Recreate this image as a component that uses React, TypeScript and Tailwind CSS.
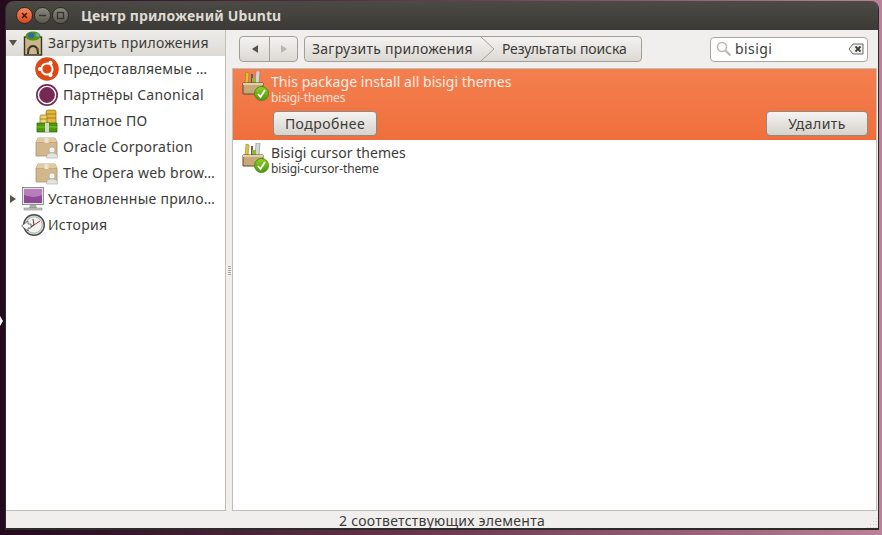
import { ReactNode } from 'react';

const Arrow = ({ open }: { open?: boolean }) => (
  <svg width="10" height="10" viewBox="0 0 10 10" className="shrink-0">
    {open ? <path d="M1 2h8L5 8z" fill="#55534e" /> : <path d="M2 1v8l6-4z" fill="#55534e" />}
  </svg>
);

const WinButton = ({ kind }: { kind: 'close' | 'min' | 'max' }) => {
  const bg = kind === 'close'
    ? 'bg-gradient-to-b from-[#f58a5a] to-[#d9451a] border-[#2e2c27]'
    : 'bg-gradient-to-b from-[#8b887f] to-[#5b5950] border-[#2e2c27]';
  return (
    <div className={`w-[17px] h-[17px] rounded-full border flex items-center justify-center ${bg}`}>
      <svg width="9" height="9" viewBox="0 0 9 9">
        {kind === 'close' && <path d="M2 2l5 5M7 2L2 7" stroke="#4a1a08" strokeWidth="1.6" />}
        {kind === 'min' && <path d="M1 4.5h7" stroke="#36342e" strokeWidth="1.6" />}
        {kind === 'max' && <rect x="1.5" y="1.5" width="6" height="6" fill="none" stroke="#36342e" strokeWidth="1.3" />}
      </svg>
    </div>
  );
};

const BoxIcon = () => (
  <svg width="24" height="24" viewBox="0 0 24 24">
    <path d="M3 3h17l2 4v14H1V7z" fill="#d2b68c" stroke="#ad926a" strokeWidth="0.8" />
    <path d="M3 3h17l2 4H1z" fill="#e0c9a5" />
    <path d="M1 7.5h21" stroke="#bda27a" strokeWidth="0.6" />
    <path d="M9.5 3h4v5h-4z" fill="#eee2cc" />
    <circle cx="17" cy="15" r="3" fill="#f3f3f1" stroke="#a5a7a2" strokeWidth="0.6" />
    <path d="M11.5 23c0-4.5 2.5-5 5.5-5s5.5 .5 5.5 5z" fill="#e2e4e0" stroke="#a5a7a2" strokeWidth="0.6" />
  </svg>
);

const UbuntuIcon = () => (
  <svg width="24" height="24" viewBox="0 0 24 24">
    <circle cx="12" cy="12" r="11.8" fill="#dd4814" />
    <circle cx="12" cy="12" r="5.6" fill="none" stroke="#fff" strokeWidth="2" />
    <circle cx="5" cy="12" r="2.1" fill="#fff" />
    <circle cx="15.5" cy="5.9" r="2.1" fill="#fff" />
    <circle cx="15.5" cy="18.1" r="2.1" fill="#fff" />
  </svg>
);

const CanonicalIcon = () => (
  <svg width="24" height="24" viewBox="0 0 24 24">
    <circle cx="12" cy="12" r="11" fill="#772953" />
    <circle cx="12" cy="12" r="8.6" fill="none" stroke="#fff" strokeWidth="1.4" />
  </svg>
);

const CoinsIcon = () => (
  <svg width="24" height="24" viewBox="0 0 24 24">
    <rect x="11" y="1" width="10" height="14" rx="2" fill="#e4b63c" stroke="#8f6d12" strokeWidth="0.7" />
    <path d="M11 5h10M11 9h10" stroke="#8f6d12" strokeWidth="0.7" />
    <rect x="5" y="6" width="7" height="9" rx="1.5" fill="#edd36b" stroke="#8f6d12" strokeWidth="0.7" />
    <path d="M5 10h7" stroke="#8f6d12" strokeWidth="0.7" />
    <path d="M2 14h20v9H2z" fill="#4e9a06" stroke="#2f6004" strokeWidth="0.7" />
    <path d="M2 18h20" stroke="#8ae234" strokeWidth="0.7" />
    <rect x="10" y="14" width="4" height="9" fill="#d3d7cf" />
  </svg>
);

const StoreIcon = () => (
  <svg width="24" height="26" viewBox="0 0 24 26">
    <rect x="3.5" y="7" width="17" height="18" fill="#c9b58e" stroke="#3d3524" strokeWidth="1.4" />
    <path d="M7 24c0-5 2-8 5-8s5 3 5 8" fill="none" stroke="#3d3524" strokeWidth="2" />
    <path d="M9 19H6M15 19h3" stroke="#6b5a3a" strokeWidth="1.5" />
    <ellipse cx="12" cy="6" rx="7.5" ry="4.5" fill="#4e9a06" />
    <circle cx="10" cy="5.5" r="3" fill="#3465a4" />
    <circle cx="16.5" cy="5" r="2" fill="#729fcf" />
  </svg>
);

const MonitorIcon = () => (
  <svg width="24" height="24" viewBox="0 0 24 24">
    <rect x="1.5" y="0.5" width="21" height="17" fill="#e4e4e2" stroke="#777" strokeWidth="0.8" />
    <rect x="3" y="2" width="18" height="14" fill="#8f4a96" />
    <path d="M3 2h18v6c-6 3-12 2-18 0z" fill="#b77cbb" />
    <path d="M9 18h6l1 3H8z" fill="#aaa" />
    <rect x="3" y="21" width="18" height="2" fill="#c9c9c7" stroke="#777" strokeWidth="0.5" />
  </svg>
);

const HistoryIcon = () => (
  <svg width="24" height="26" viewBox="0 0 24 26">
    <circle cx="13" cy="13" r="10.3" fill="#d8d8d6" stroke="#4c4c4a" strokeWidth="1.4" />
    <circle cx="13" cy="13" r="8" fill="#f3f3f2" stroke="#9a9a98" strokeWidth="0.6" />
    <path d="M13 13l-5 3" stroke="#444" strokeWidth="1.3" />
    <path d="M13 13l6-4" stroke="#cc2222" strokeWidth="1" />
    <path d="M13 13l-1-6" stroke="#444" strokeWidth="1" />
    <path d="M0.5 14l6.5-5v3h3v4H7v3z" fill="#f6f6f5" stroke="#555" strokeWidth="0.8" />
  </svg>
);

const PackageIcon = () => (
  <div className="relative w-[28px] h-[32px] shrink-0">
    <svg width="22" height="24" viewBox="0 0 22 24">
      <path d="M4 1l3 1-1 11H3z" fill="#e4c12e" stroke="#8f7a12" strokeWidth="0.5" />
      <path d="M9 3h2v10H9z" fill="#75507b" />
      <path d="M14 0h4l-1 13h-4z" fill="#d3d7cf" stroke="#777" strokeWidth="0.5" />
      <path d="M10 7h4v6h-4z" fill="#8ab832" />
      <path d="M1 12h20v11H1z" fill="#c9a878" stroke="#5e4a2c" />
      <path d="M1 12h20v2H1z" fill="#e3cfa8" />
    </svg>
    <div className="absolute left-[12px] top-[15px] w-[15px] h-[15px] rounded-full bg-gradient-to-b from-[#8fd024] to-[#4c9a0a] border border-[#4c8a12] flex items-center justify-center">
      <svg width="11" height="11" viewBox="0 0 11 11">
        <path d="M2 6l2.5 3L9 2" fill="none" stroke="#fff" strokeWidth="1.7" />
      </svg>
    </div>
  </div>
);

const SideRow = ({ icon, label, selected, arrow, child }: { icon: ReactNode; label: string; selected?: boolean; arrow?: ReactNode; child?: boolean }) => (
  <div className={`flex items-center h-[26px] ${selected ? 'bg-gradient-to-b from-[#eeedea] to-[#dcdad5]' : ''}`}>
    <div className="w-[14px] pl-[2px] shrink-0 flex items-center">{arrow}</div>
    <div className={`shrink-0 flex items-center ${child ? 'ml-[13px] w-[28px] justify-center' : 'w-[28px] pl-[1px]'}`}>{icon}</div>
    <span className={`whitespace-nowrap text-[#3c3b37] tracking-[0.25px] ${child ? 'ml-[2px]' : ''}`}>{label}</span>
  </div>
);

const PushButton = ({ label, width }: { label: string; width: string }) => (
  <div className={`${width} h-[25px] flex items-center justify-center rounded-[4px] border border-[#8f8b82] bg-gradient-to-b from-[#f4f3f1] to-[#d6d3cd] text-[#3c3b37] tracking-[0.45px]`}>
    {label}
  </div>
);

export default function App() {
  return (
    <div className="relative w-[882px] h-[535px] overflow-hidden bg-gradient-to-r from-[#230a1c] via-[#6a3a52] to-[#b98298] pl-[6px] pr-[4px] pb-[5px] pt-px flex flex-col font-['Noto_Sans',sans-serif] text-[14px] leading-none">
      <div className="absolute left-0 top-[316px] w-0 h-0 border-y-[5px] border-y-transparent border-l-[3px] border-l-white" />
      <div className="relative flex-1 flex flex-col min-h-0 rounded-t-[8px] overflow-hidden border-b-2 border-[#2e2c29] shadow-[-1px_0_0_#2e2c29,1px_0_0_#2e2c29]">
        <div className="h-[29px] shrink-0 flex items-center bg-gradient-to-b from-[#4b4a45] to-[#3b3a36] pl-[10px]">
          <div className="flex items-center gap-[1px]">
            <WinButton kind="close" />
            <WinButton kind="min" />
            <WinButton kind="max" />
          </div>
          <span className="ml-[12px] font-bold text-[#dfdbd2] tracking-[0.15px]">Центр приложений Ubuntu</span>
        </div>

        <div className="flex-1 flex min-h-0 bg-[#f0efed]">
          <div className="w-[220px] shrink-0 bg-white border-r border-b border-[#c1bfb8] overflow-hidden">
            <SideRow selected arrow={<Arrow open />} icon={<StoreIcon />} label="Загрузить приложения" />
            <SideRow child icon={<UbuntuIcon />} label="Предоставляемые …" />
            <SideRow child icon={<CanonicalIcon />} label="Партнёры Canonical" />
            <SideRow child icon={<CoinsIcon />} label="Платное ПО" />
            <SideRow child icon={<BoxIcon />} label="Oracle Corporation" />
            <SideRow child icon={<BoxIcon />} label="The Opera web brow…" />
            <SideRow arrow={<Arrow />} icon={<MonitorIcon />} label="Установленные прило…" />
            <SideRow icon={<HistoryIcon />} label="История" />
          </div>

          <div className="w-[6px] shrink-0 flex items-center justify-center">
            <div className="w-[3px] h-[9px] bg-[repeating-linear-gradient(to_bottom,#a8a69f_0,#a8a69f_1px,transparent_1px,transparent_2px)]" />
          </div>

          <div className="flex-1 min-w-0 flex flex-col">
            <div className="h-[38px] shrink-0 flex items-center pl-[7px] pr-[10px]">
              <div className="flex h-[26px] w-[59px] rounded-[4px] border border-[#a39f95] bg-gradient-to-b from-[#f4f3f1] to-[#dcd9d4]">
                <div className="w-[30px] border-r border-[#a39f95] flex items-center justify-center">
                  <svg width="8" height="10" viewBox="0 0 8 10"><path d="M7 1v8L1 5z" fill="#55534e" /></svg>
                </div>
                <div className="flex-1 flex items-center justify-center">
                  <svg width="8" height="10" viewBox="0 0 8 10"><path d="M1 1v8l6-4z" fill="#b9b7b0" /></svg>
                </div>
              </div>
              <div className="ml-[6px] w-[338px] h-[26px] flex rounded-[4px] border border-[#a39f95] bg-gradient-to-b from-[#f4f3f1] to-[#dcd9d4] text-[#3c3b37]">
                <span className="pl-[7px] self-center whitespace-nowrap tracking-[0.25px]">Загрузить приложения</span>
                <svg width="17" height="24" viewBox="0 0 17 24" className="ml-[7px] shrink-0">
                  <path d="M1 0l13 12L1 24" fill="none" stroke="#a39f95" />
                </svg>
                <span className="self-center whitespace-nowrap tracking-[-0.1px] ml-[5px]">Результаты поиска</span>
              </div>
              <div className="ml-auto w-[158px] h-[25px] flex items-center rounded-[4px] border border-[#a8a59c] bg-white pl-[5px] pr-[3px]">
                <svg width="16" height="16" viewBox="0 0 16 16" className="shrink-0">
                  <circle cx="6" cy="6" r="4.5" fill="none" stroke="#b8b8b4" strokeWidth="1.6" />
                  <path d="M9.5 9.5l5 5" stroke="#b8b8b4" strokeWidth="2.2" />
                </svg>
                <span className="ml-[3px] text-[#3c3b37] tracking-[0.4px]">bisigi</span>
                <svg width="16" height="12" viewBox="0 0 16 12" className="ml-auto shrink-0">
                  <path d="M5 1h10v10H5L1 6z" fill="#eeeeec" stroke="#6a6a66" />
                  <path d="M7.5 3.5l5 5M12.5 3.5l-5 5" stroke="#3c3b37" strokeWidth="1.8" />
                </svg>
              </div>
            </div>

            <div className="flex-1 min-h-0 bg-white border border-[#c1bfb8] mr-[1px]">
              <div className="h-[71px] bg-gradient-to-b from-[#f47f4f] to-[#ef6f3c] pl-[9px] pr-[8px] pt-[2px]">
                <div className="flex">
                  <PackageIcon />
                  <div className="pt-[3px] leading-[16px]">
                    <div className="text-[#fdf0e9] tracking-[0.06px] ml-[1px]">This package install all bisigi themes</div>
                    <div className="text-[12px] text-[#fbe3d8] tracking-[-0.12px] ml-[1px]">bisigi-themes</div>
                  </div>
                </div>
                <div className="flex justify-between pl-[31px] mt-[5px]">
                  <PushButton width="w-[104px]" label="Подробнее" />
                  <PushButton width="w-[102px]" label="Удалить" />
                </div>
              </div>
              <div className="flex pl-[9px] pt-[3px]">
                <PackageIcon />
                <div className="pt-[2px] leading-[15px]">
                  <div className="text-[#3c3b37] tracking-[0.04px] ml-[1px]">Bisigi cursor themes</div>
                  <div className="text-[12px] text-[#3c3b37] tracking-[-0.12px] ml-[1px] mt-[1px]">bisigi-cursor-theme</div>
                </div>
              </div>
            </div>
          </div>
        </div>

        <div className="h-[17px] shrink-0 bg-[#f0efed] flex items-center justify-center pt-[2px] text-[#3c3b37] tracking-[0.27px]">
          2 соответствующих элемента
        </div>
        <svg width="11" height="11" viewBox="0 0 11 11" className="absolute right-0 bottom-0">
          <path d="M9 1h1v1H9zM6 4h1v1H6zM9 4h1v1H9zM3 7h1v1H3zM6 7h1v1H6zM9 7h1v1H9zM0 10h1v1H0zM3 10h1v1H3zM6 10h1v1H6zM9 10h1v1H9z" fill="#cfcdc7" />
        </svg>
      </div>
    </div>
  );
}
